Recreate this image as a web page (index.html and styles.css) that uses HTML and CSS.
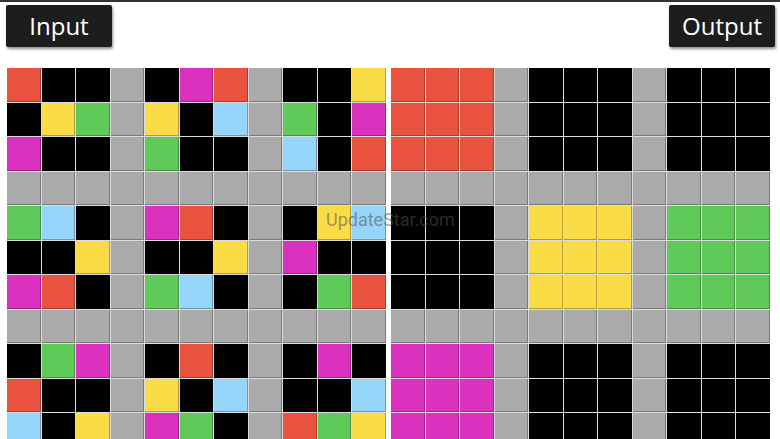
FILE: index.html
```html
<!DOCTYPE html>
<html lang="en">
<head>
    <meta charset="UTF-8">
    <meta name="viewport" content="width=device-width, initial-scale=1.0">
    <title>Input / Output</title>
    <link rel="stylesheet" href="styles.css">
</head>
<body>
    <div class="topbar">
        <button class="tab">Input</button>
        <button class="tab">Output</button>
    </div>

    <div class="boards">
        <div class="board" id="inputBoard"></div>
        <div class="board" id="outputBoard"></div>
        <div class="watermark">UpdateStar.com</div>
    </div>

    <script>
        const colors = { R: "red", K: "black", ".": "gray", Y: "yellow", N: "green", M: "magenta", B: "blue" };

        const inputRows = [
            "RKK.KMR.KKY",
            "KYN.YKB.NKM",
            "MKK.NKK.BKR",
            "...........",
            "NBK.MRK.KYB",
            "KKY.KKY.MKK",
            "MRK.NBK.KNR",
            "...........",
            "KNM.KRK.KMK",
            "RKK.YKB.KKB",
            "BKY.MNK.RNY"
        ];

        const outputRows = [
            "RRR.KKK.KKK",
            "RRR.KKK.KKK",
            "RRR.KKK.KKK",
            "...........",
            "KKK.YYY.NNN",
            "KKK.YYY.NNN",
            "KKK.YYY.NNN",
            "...........",
            "MMM.KKK.KKK",
            "MMM.KKK.KKK",
            "MMM.KKK.KKK"
        ];

        function fillBoard(id, rows) {
            let board = document.getElementById(id);
            let html = "";
            rows.forEach(row => {
                for (let ch of row) {
                    html += `<div class="cell ${colors[ch]}"></div>`;
                }
            });
            board.innerHTML = html;
        }

        fillBoard("inputBoard", inputRows);
        fillBoard("outputBoard", outputRows);
    </script>
</body>
</html>
```

FILE: styles.css
```css
html, body {
    margin: 0;
    height: 439px;
    overflow: hidden;
}
body {
    background: #fff;
    font-family: "Liberation Sans", Arial, sans-serif;
    border-top: 2px solid #333;
}
.topbar {
    display: flex;
    justify-content: space-between;
    padding: 3px 5px 0 6px;
}
.tab {
    width: 106px;
    height: 42px;
    padding: 0 0 1px;
    background: #1d1d1d;
    color: #fff;
    border: none;
    border-radius: 2px;
    font-family: "Open Sans", "Liberation Sans", Arial, sans-serif;
    font-size: 24px;
    box-shadow: 1px 2px 3px rgba(0, 0, 0, 0.45);
}
.boards {
    position: relative;
    display: flex;
    gap: 5.5px;
    margin-top: 21px;
    padding-left: 7px;
}
.board {
    display: grid;
    grid-template-columns: repeat(11, 33.5px);
    grid-auto-rows: 33.5px;
    gap: 1px;
    background: #dcdcdc;
}
.cell {
    box-shadow: inset -1px -1px 0 rgba(0, 0, 0, 0.28);
}
.red { background: #e8523f; }
.black { background: #000; }
.gray { background: #aaaaaa; }
.yellow { background: #fadc46; }
.green { background: #5fc95a; }
.magenta { background: #da31bf; }
.blue { background: #95d5fa; }
.watermark {
    position: absolute;
    left: 326px;
    top: 141px;
    font-family: Roboto, "Liberation Sans", sans-serif;
    font-size: 18px;
    color: rgba(80, 80, 80, 0.55);
}
```
